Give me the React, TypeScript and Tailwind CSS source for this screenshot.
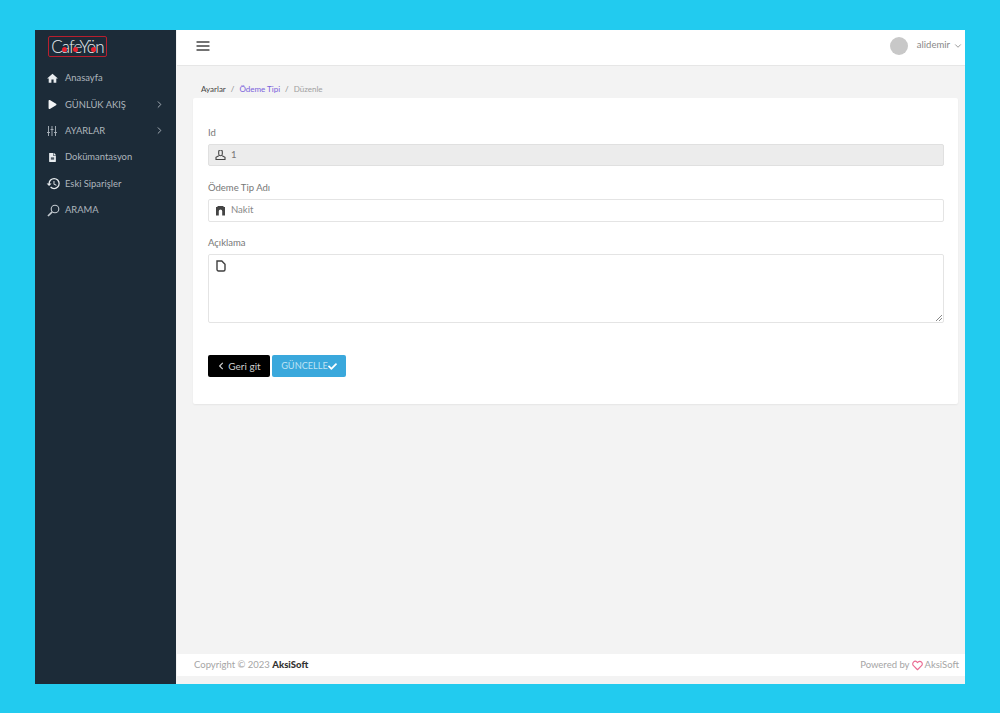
import React from "react";
import { FaPlay, FaFileAlt, FaChevronLeft, FaCheck } from "react-icons/fa";
import { FiChevronRight, FiChevronDown, FiMenu, FiHeart } from "react-icons/fi";
import { MdHome, MdHistory } from "react-icons/md";

const font = { fontFamily: "Lato, 'Open Sans', sans-serif" };

const SlidersIcon = () => (
  <svg width="10" height="10" viewBox="0 0 10 10" fill="none" stroke="#aeb6bd" strokeWidth="0.9">
    <path d="M1.5 0V10M5 0V10M8.5 0V10" />
    <path d="M0 6.5H3M3.5 3.5H6.5M7 6.5H10" />
  </svg>
);

const SearchIcon = () => (
  <svg width="13" height="13" viewBox="0 0 13 13" fill="none" stroke="#c3cad0" strokeWidth="1.1">
    <circle cx="8" cy="5" r="3.8" />
    <path d="M5.2 7.8L1 12" strokeWidth="1.7" />
  </svg>
);

const UserIcon = () => (
  <svg width="11" height="11" viewBox="0 0 11 11" fill="none" stroke="#444" strokeWidth="1.1">
    <path d="M3.7 1.8a1.8 1.8 0 0 1 3.6 0V4a1.8 1.8 0 0 1-3.6 0z" />
    <path d="M3.8 5.8L1 7.3V9.5H10V7.3L7.2 5.8" />
  </svg>
);

const StoreIcon = () => (
  <svg width="11" height="10" viewBox="0 0 11 10" fill="#444">
    <path d="M1 1H10V9.5H7.2V5.2A1.7 1.7 0 0 0 3.8 5.2V9.5H1Z" />
    <path d="M2.5 0H8.5V1H2.5Z" />
  </svg>
);

const PageIcon = () => (
  <svg width="10" height="12" viewBox="0 0 10 12" fill="none" stroke="#3f3f3f" strokeWidth="1.4">
    <path d="M1 1H5.8L9 4.2V9.5A1.5 1.5 0 0 1 7.5 11H2.5A1.5 1.5 0 0 1 1 9.5Z" />
  </svg>
);

const menu = [
  { label: "Anasayfa", icon: <MdHome className="ml-[-1px] text-[13px] text-[#e8ecef]" /> },
  { label: "GÜNLÜK AKIŞ", icon: <FaPlay className="ml-[1px] text-[9px] text-[#f2f4f6]" />, arrow: true },
  { label: "AYARLAR", icon: <SlidersIcon />, arrow: true },
  { label: "Dokümantasyon", icon: <FaFileAlt className="ml-[1px] text-[9px] text-[#e8ecef]" /> },
  { label: "Eski Siparişler", icon: <MdHistory className="ml-[-1px] text-[15px] text-[#e8ecef]" /> },
  { label: "ARAMA", icon: <SearchIcon /> },
];

export default function App() {
  return (
    <div className="min-h-[713px] bg-[#22cbef] px-[35px] pt-[30px] pb-[29px]" style={font}>
      <div className="flex h-[654px] bg-[#f3f3f3]">
        <aside className="w-[141px] shrink-0 bg-[#1c2b38] pt-[6px]">
          <div className="relative ml-[13px] flex h-[21px] w-[59px] items-center justify-center rounded-[2px] border border-[#b81f2e] text-[17px] font-light leading-none tracking-[-1px] text-[#e8eef2]">
            CafeYön
            <span className="absolute top-[10px] left-[13px] h-[5px] w-[5px] rounded-full bg-[#e8222f]" />
            <span className="absolute top-[10px] left-[24px] h-[5px] w-[5px] rounded-full bg-[#e8222f]" />
            <span className="absolute top-[10px] left-[42px] h-[5px] w-[5px] rounded-full bg-[#e8222f]" />
          </div>
          <nav className="mt-[8px]">
            {menu.map((item) => (
              <div key={item.label} className="flex h-[26.4px] items-center pl-[12px] pr-[11px] text-[9.4px] text-[#aeb6bd]">
                <span className="flex w-[18px] shrink-0 items-center">{item.icon}</span>
                <span className="flex-1">{item.label}</span>
                {item.arrow && <FiChevronRight className="text-[11px] text-[#aeb6bd]" />}
              </div>
            ))}
          </nav>
        </aside>

        <div className="ml-px flex min-w-0 flex-1 flex-col">
          <header className="flex h-[36px] shrink-0 items-center justify-between border-b border-[#e6e6e6] bg-white pr-[2px] pb-[4px] pl-[18px]">
            <FiMenu className="text-[16px] text-[#444]" />
            <div className="flex items-center">
              <div className="h-[18px] w-[18px] rounded-full bg-[#c8c8c8]" />
              <span className="ml-[9px] text-[9.5px] text-[#888]">alidemir</span>
              <FiChevronDown className="ml-[3px] text-[10px] text-[#888]" />
            </div>
          </header>

          <main className="flex flex-1 flex-col pt-[18px] pl-[16px] pr-[7px]">
            <div className="flex h-[14px] items-center pb-[4px] pl-[8px] text-[8px]">
              <span className="text-[#444]">Ayarlar</span>
              <span className="mx-[5px] text-[#888]">/</span>
              <span className="text-[#7a62dc]">Ödeme Tipi</span>
              <span className="mx-[5px] text-[#888]">/</span>
              <span className="text-[#a0a0a0]">Düzenle</span>
            </div>

            <section className="h-[306px] rounded-[2px] bg-white pt-[28px] pr-[14px] pl-[15px] shadow-[0_1px_2px_rgba(0,0,0,0.06)]">
              <label className="block text-[9.5px] leading-[14px] text-[#777]">Id</label>
              <div className="mt-[4px] flex h-[22px] items-center rounded-[2px] border border-[#e0e0e0] bg-[#ececec] pl-[6px] text-[9.5px] text-[#777]">
                <UserIcon />
                <span className="ml-[5px]">1</span>
              </div>

              <label className="mt-[15px] block text-[9.5px] leading-[14px] text-[#777]">Ödeme Tip Adı</label>
              <div className="mt-[4px] flex h-[23px] items-center rounded-[2px] border border-[#e4e4e4] bg-white pl-[6px] text-[9.5px] text-[#888]">
                <StoreIcon />
                <span className="ml-[5px]">Nakit</span>
              </div>

              <label className="mt-[14px] block text-[9.5px] leading-[14px] text-[#777]">Açıklama</label>
              <div className="relative mt-[4px] h-[69px] rounded-[2px] border border-[#e4e4e4] bg-white pt-[5px] pl-[7px]">
                <PageIcon />
                <svg className="absolute right-[1px] bottom-[1px]" width="6" height="6" viewBox="0 0 6 6" stroke="#888" strokeWidth="1">
                  <path d="M0 6L6 0M3 6L6 3" />
                </svg>
              </div>

              <div className="mt-[32px] flex gap-[2px]">
                <button className="flex h-[22px] w-[62px] items-center justify-center rounded-[2px] bg-black text-[10px] text-[#cfcfcf]">
                  <FaChevronLeft className="mr-[3px] text-[8px]" />
                  Geri git
                </button>
                <button className="flex h-[22px] w-[74px] items-center justify-center rounded-[2px] bg-[#3aa8dc] text-[9.2px] text-[#bfe3f4]">
                  GÜNCELLE
                  <FaCheck className="text-[9px] text-white" />
                </button>
              </div>
            </section>

            <div className="flex-1" />
          </main>

          <footer className="mb-[8px] flex h-[22px] shrink-0 items-center justify-between bg-white pr-[6px] pl-[17px] text-[9.5px] text-[#a5a5a5]">
            <span>
              Copyright © 2023 <b className="font-black text-[#333]">AksiSoft</b>
            </span>
            <span className="flex items-center">
              Powered by
              <FiHeart className="mx-[2px] text-[11px] stroke-[2.5] text-[#ea6a92]" />
              AksiSoft
            </span>
          </footer>
        </div>
      </div>
    </div>
  );
}
